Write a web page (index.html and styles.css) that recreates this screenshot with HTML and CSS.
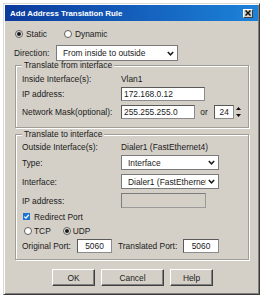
FILE: index.html
```html
<!DOCTYPE html>
<html>
<head>
<meta charset="utf-8">
<link rel="stylesheet" href="styles.css">
</head>
<body>
<div class="dialog">
  <div class="titlebar">
    <span class="title">Add Address Translation Rule</span>
    <span class="close"><svg width="6" height="6" viewBox="0 0 6 6"><path d="M0.5 0.5 L5.5 5.5 M5.5 0.5 L0.5 5.5" stroke="#111" stroke-width="1.5"/></svg></span>
  </div>
  <div class="content">
    <div class="row1">
      <span class="opt"><span class="radio on"></span>Static</span>
      <span class="opt opt-dyn"><span class="radio"></span>Dynamic</span>
    </div>
    <div class="dirrow">
      <span class="dir-label">Direction:</span>
      <div class="select sel-dir"><span class="sel-text">From inside to outside</span><svg class="chev" width="7" height="5" viewBox="0 0 7 5"><polyline points="0.8,1 3.5,3.8 6.2,1" fill="none" stroke="#1a1a1a" stroke-width="1.5"/></svg></div>
    </div>

    <div class="group g1">
      <div class="legend">Translate from interface</div>
      <div class="frow r14 m2"><span class="lbl">Inside Interface(s):</span><span>Vlan1</span></div>
      <div class="frow r14 m1"><span class="lbl">IP address:</span><div class="input w84">172.168.0.12</div></div>
      <div class="frow r14 m4"><span class="lbl">Network Mask(optional):</span><div class="input w84">255.255.255.0</div><span class="or">or</span><div class="input spin">24</div>
        <div class="spinner">
          <span class="sp"><svg width="5" height="3" viewBox="0 0 5 3"><polygon points="0,3 2.5,0 5,3" fill="#111"/></svg></span>
          <span class="sp"><svg width="5" height="3" viewBox="0 0 5 3"><polygon points="0,0 2.5,3 5,0" fill="#111"/></svg></span>
        </div>
      </div>
    </div>

    <div class="group g2">
      <div class="legend">Translate to interface</div>
      <div class="frow r14 m1"><span class="lbl">Outside Interface(s):</span><span>Dialer1 (FastEthernet4)</span></div>
      <div class="frow r15 m1"><span class="lbl">Type:</span><div class="select sel-w98"><span class="sel-text">Interface</span><svg class="chev" width="7" height="5" viewBox="0 0 7 5"><polyline points="0.8,1 3.5,3.8 6.2,1" fill="none" stroke="#1a1a1a" stroke-width="1.5"/></svg></div></div>
      <div class="frow r15 m4"><span class="lbl">Interface:</span><div class="select sel-w98"><span class="sel-text clip">Dialer1 (FastEthernet4)</span><svg class="chev" width="7" height="5" viewBox="0 0 7 5"><polyline points="0.8,1 3.5,3.8 6.2,1" fill="none" stroke="#1a1a1a" stroke-width="1.5"/></svg></div></div>
      <div class="frow r15 m4"><span class="lbl">IP address:</span><div class="input w85 disabled"></div></div>
      <div class="frow r13 m2"><span class="check"><svg width="7" height="7" viewBox="0 0 7 7"><polyline points="1.3,3.6 2.9,5.1 5.8,1.8" fill="none" stroke="#fff" stroke-width="1.3"/></svg></span>Redirect Port</div>
      <div class="frow r13 m1"><span class="opt opt-tcp"><span class="radio"></span>TCP</span><span class="opt opt-udp"><span class="radio on"></span>UDP</span></div>
      <div class="frow r14 m2"><span class="plbl1">Original Port:</span><div class="input port1">5060</div><span class="plbl2">Translated Port:</span><div class="input port2">5060</div></div>
    </div>

    <div class="buttons">
      <span class="btn b-ok">OK</span>
      <span class="btn b-cancel">Cancel</span>
      <span class="btn b-help">Help</span>
    </div>
  </div>
</div>
</body>
</html>
```

FILE: styles.css
```css
* { box-sizing: border-box; }
html, body { margin: 0; padding: 0; }
body {
  background: #fff;
  width: 268px;
  height: 300px;
  overflow: hidden;
  padding: 3px 0 0 3px;
  font-family: "Liberation Sans", Arial, sans-serif;
  font-size: 8.4px;
  color: #1a1a1a;
}
.dialog {
  width: 257px;
  height: 292px;
  background: #d4d0c8;
  border: 1px solid;
  border-color: #dcdad5 #3a3a3a #3a3a3a #dcdad5;
  padding: 1px;
  box-shadow: inset 1px 1px 0 #fff, inset -1px -1px 0 #808080;
}
.titlebar {
  height: 16px;
  background: linear-gradient(to right, #0b3a9c, #1c82d8);
  display: flex;
  align-items: center;
  justify-content: space-between;
  padding: 0 5px 0 5px;
}
.title {
  color: #fff;
  font-weight: bold;
  font-size: 7.9px;
}
.close {
  width: 10px;
  height: 9px;
  background: #d4d0c8;
  border: 1px solid;
  border-color: #fff #404040 #404040 #fff;
  display: flex;
  align-items: center;
  justify-content: center;
}
.content { padding: 5px 9px 0 10px; }
.row1 { display: flex; align-items: center; height: 15px; }
.opt { display: flex; align-items: center; }
.radio {
  width: 8px;
  height: 8px;
  border-radius: 50%;
  border: 1px solid #5e5e5e;
  background: #fff;
  margin-right: 3px;
  display: flex;
  align-items: center;
  justify-content: center;
}
.radio.on { background: #e6e6e6; }
.radio.on::after {
  content: "";
  width: 4px;
  height: 4px;
  border-radius: 50%;
  background: #1a1a1a;
}
.opt-dyn { margin-left: 17px; }
.dirrow { display: flex; align-items: center; height: 16px; margin-top: 4px; }
.dir-label { width: 42px; margin-left: -1px; }
.select {
  height: 100%;
  background: #fff;
  border: 1px solid #7a7a7a;
  display: flex;
  align-items: center;
  justify-content: space-between;
  padding: 0 3px 0 6px;
}
.sel-dir { width: 122px; }
.sel-w98 { width: 98px; }
.sel-text { white-space: nowrap; }
.clip { overflow: hidden; width: 78px; }
.chev { flex: none; }
.group {
  width: 234px;
  border: 1px solid #a19e97;
  box-shadow: inset 1px 1px 0 #fff, 1px 1px 0 #fff;
  padding: 0 6px 8px 6px;
}
.g1 { margin-top: 4px; }
.g2 { margin-top: 6px; padding-bottom: 6px; }
.legend {
  width: max-content;
  margin-top: -6px;
  height: 10px;
  line-height: 10px;
  padding: 0 2px;
  background: #d4d0c8;
}
.frow { display: flex; align-items: center; }
.r13 { height: 13px; }
.r14 { height: 14px; }
.r15 { height: 15px; }
.m1 { margin-top: 1px; }
.m2 { margin-top: 2px; }
.m4 { margin-top: 4px; }
.lbl { width: 99px; flex: none; }
.input {
  height: 100%;
  background: #fff;
  border: 1px solid;
  border-color: #5a5a5a #8c8c8c #8c8c8c #5a5a5a;
  padding-left: 2px;
  display: flex;
  align-items: center;
  white-space: nowrap;
}
.w84 { width: 84px; }
.w85 { width: 85px; }
.disabled { background: #d4d0c8; border-color: #7c7c7c #9a9a9a #9a9a9a #7c7c7c; }
.or { margin-left: 5px; width: 16px; }
.spin { width: 22px; justify-content: center; padding: 0; }
.spinner {
  margin-left: 1px;
  width: 8px;
  height: 100%;
  display: flex;
  flex-direction: column;
}
.sp {
  flex: 1;
  display: flex;
  align-items: center;
  justify-content: center;
  background: #d4d0c8;
}
.check {
  width: 7px;
  height: 7px;
  margin-left: 1px;
  margin-right: 4px;
  background: #1e72d0;
  border: none;
  display: flex;
}
.opt-tcp { margin-left: 2px; }
.opt-tcp .radio, .opt-udp .radio { margin-right: 2px; }
.opt-udp { margin-left: 12px; }
.plbl1 { width: 55px; }
.port1 { width: 35px; justify-content: center; padding: 0; }
.plbl2 { width: 65px; margin-left: 6px; }
.port2 { width: 36px; justify-content: center; padding: 0; }
.buttons {
  display: flex;
  gap: 6px;
  margin: 9px 0 0 37px;
}
.btn {
  height: 17px;
  display: flex;
  align-items: center;
  justify-content: center;
  background: #d4d0c8;
  border: 1px solid;
  border-color: #fff #404040 #404040 #fff;
  box-shadow: inset -1px -1px 0 #808080;
}
.b-ok { width: 43px; }
.b-cancel { width: 63px; }
.b-help { width: 43px; }
```
